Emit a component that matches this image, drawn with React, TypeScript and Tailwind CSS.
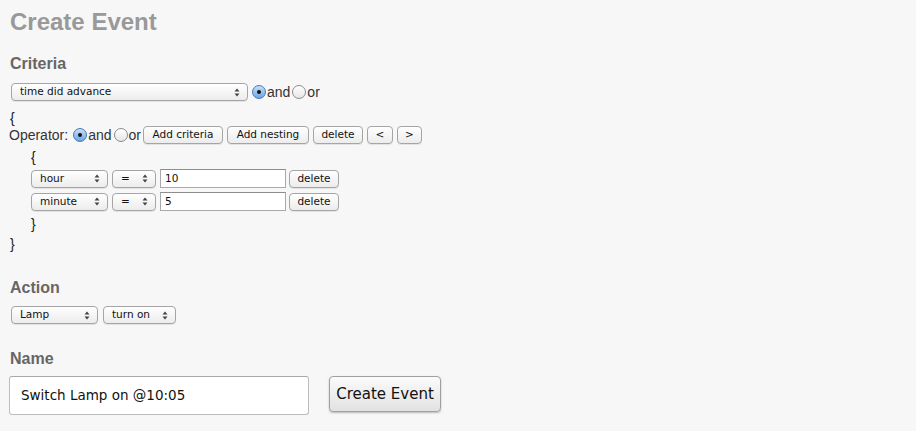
import React from 'react'

const ctl = { fontFamily: '"DejaVu Sans", Verdana, sans-serif' }
const body = { fontFamily: '"Liberation Sans", Arial, sans-serif' }

function Arrows() {
  return (
    <svg width="6" height="9" viewBox="0 0 6 9" className="shrink-0">
      <path d="M3 0.5 L5.5 3.5 L0.5 3.5 Z" fill="#444" />
      <path d="M3 8.5 L5.5 5.5 L0.5 5.5 Z" fill="#444" />
    </svg>
  )
}

function Select({ label, w }: { label: string; w: string }) {
  return (
    <div
      style={ctl}
      className={`${w} h-[18px] flex items-center justify-between pl-[8px] pr-[7px] rounded-[4px] border border-[#a5a5a5] bg-gradient-to-b from-white to-[#ececec] text-[10.5px] text-[#111] shadow-[0_1px_0_rgba(0,0,0,0.08)]`}
    >
      <span>{label}</span>
      <Arrows />
    </div>
  )
}

function Button({ label, w }: { label: string; w: string }) {
  return (
    <div
      style={ctl}
      className={`${w} h-[18px] flex items-center justify-center rounded-[4px] border border-[#a5a5a5] bg-gradient-to-b from-white to-[#ececec] text-[10.5px] text-[#111] shadow-[0_1px_0_rgba(0,0,0,0.08)]`}
    >
      {label}
    </div>
  )
}

function Radio({ checked }: { checked?: boolean }) {
  if (checked) {
    return (
      <span className="w-[14px] h-[14px] rounded-full border border-[#4a79b8] bg-gradient-to-b from-[#c8dff5] to-[#6aa6e4] flex items-center justify-center shrink-0">
        <span className="w-[4px] h-[4px] rounded-full bg-[#111]" />
      </span>
    )
  }
  return (
    <span className="w-[14px] h-[14px] rounded-full border border-[#8c8c8c] bg-gradient-to-b from-white to-[#e6e6e6] shrink-0" />
  )
}

function AndOr() {
  return (
    <div className="flex items-center text-[14px] text-[#333]" style={body}>
      <Radio checked />
      <span className="ml-[1px] mr-[2px]">and</span>
      <Radio />
      <span className="ml-[1px] mr-[1px]">or</span>
    </div>
  )
}

function Input({ value }: { value: string }) {
  return (
    <div
      style={ctl}
      className="w-[126px] h-[19px] flex items-center pl-[4px] border border-[#a9a9a9] border-t-[#8d8d8d] bg-white text-[10.5px] text-[#111]"
    >
      {value}
    </div>
  )
}

function Criterion({ field, value }: { field: string; value: string }) {
  return (
    <div className="flex items-center h-[19px]">
      <Select label={field} w="w-[77px]" />
      <div className="w-[4px]" />
      <Select label="=" w="w-[44px]" />
      <div className="w-[4px]" />
      <Input value={value} />
      <div className="w-[3px]" />
      <Button label="delete" w="w-[50px]" />
    </div>
  )
}

export default function App() {
  return (
    <div className="w-[916px] h-[431px] bg-[#f7f7f7] pl-[10px] overflow-hidden" style={body}>
      <h1 className="pt-[8px] h-[36px] leading-[28px] text-[24px] font-bold text-[#999]">Create Event</h1>

      <h2 className="mt-[18px] h-[20px] leading-[20px] text-[16px] font-bold text-[#666]">Criteria</h2>
      <div className="mt-[9px] flex items-center gap-[4px] h-[18px] pl-[1px]">
        <Select label="time did advance" w="w-[237px]" />
        <AndOr />
      </div>

      <div className="mt-[9px] h-[16px] leading-[16px] text-[14px] text-[#222]">{'{'}</div>
      <div className="flex items-center h-[18px] -ml-[1px] text-[14px] text-[#333]">
        <span className="mr-[5px]">Operator:</span>
        <AndOr />
        <div className="w-[1px]" />
        <Button label="Add criteria" w="w-[80px]" />
        <div className="w-[4px]" />
        <Button label="Add nesting" w="w-[82px]" />
        <div className="w-[4px]" />
        <Button label="delete" w="w-[50px]" />
        <div className="w-[4px]" />
        <Button label="<" w="w-[26px]" />
        <div className="w-[4px]" />
        <Button label=">" w="w-[25px]" />
      </div>

      <div className="pl-[21px]">
        <div className="mt-[5px] h-[16px] leading-[16px] text-[14px] text-[#222]">{'{'}</div>
        <div className="mt-[4px] flex flex-col gap-[4px]">
          <Criterion field="hour" value="10" />
          <Criterion field="minute" value="5" />
        </div>
        <div className="mt-[5px] h-[16px] leading-[16px] text-[14px] text-[#222]">{'}'}</div>
      </div>
      <div className="mt-[4px] h-[16px] leading-[16px] text-[14px] text-[#222]">{'}'}</div>

      <h2 className="mt-[26px] h-[20px] leading-[20px] text-[16px] font-bold text-[#666]">Action</h2>
      <div className="mt-[8px] flex items-center gap-[5px] pl-[1px]">
        <Select label="Lamp" w="w-[87px]" />
        <Select label="turn on" w="w-[73px]" />
      </div>

      <h2 className="mt-[25px] h-[20px] leading-[20px] text-[16px] font-bold text-[#666]">Name</h2>
      <div className="mt-[7px] flex items-start -ml-[1px]">
        <div
          style={ctl}
          className="w-[300px] h-[39px] flex items-center pl-[11px] rounded-[3px] border border-[#bdbdbd] border-t-[#a8a8a8] bg-white text-[13.5px] text-[#111]"
        >
          Switch Lamp on @10:05
        </div>
        <div
          style={ctl}
          className="ml-[20px] w-[112px] h-[36px] flex items-center justify-center rounded-[4px] border border-[#a0a0a0] bg-gradient-to-b from-[#fbfbfb] to-[#e2e2e2] text-[15px] text-[#111] shadow-[0_1px_2px_rgba(0,0,0,0.25)]"
        >
          Create Event
        </div>
      </div>
    </div>
  )
}
